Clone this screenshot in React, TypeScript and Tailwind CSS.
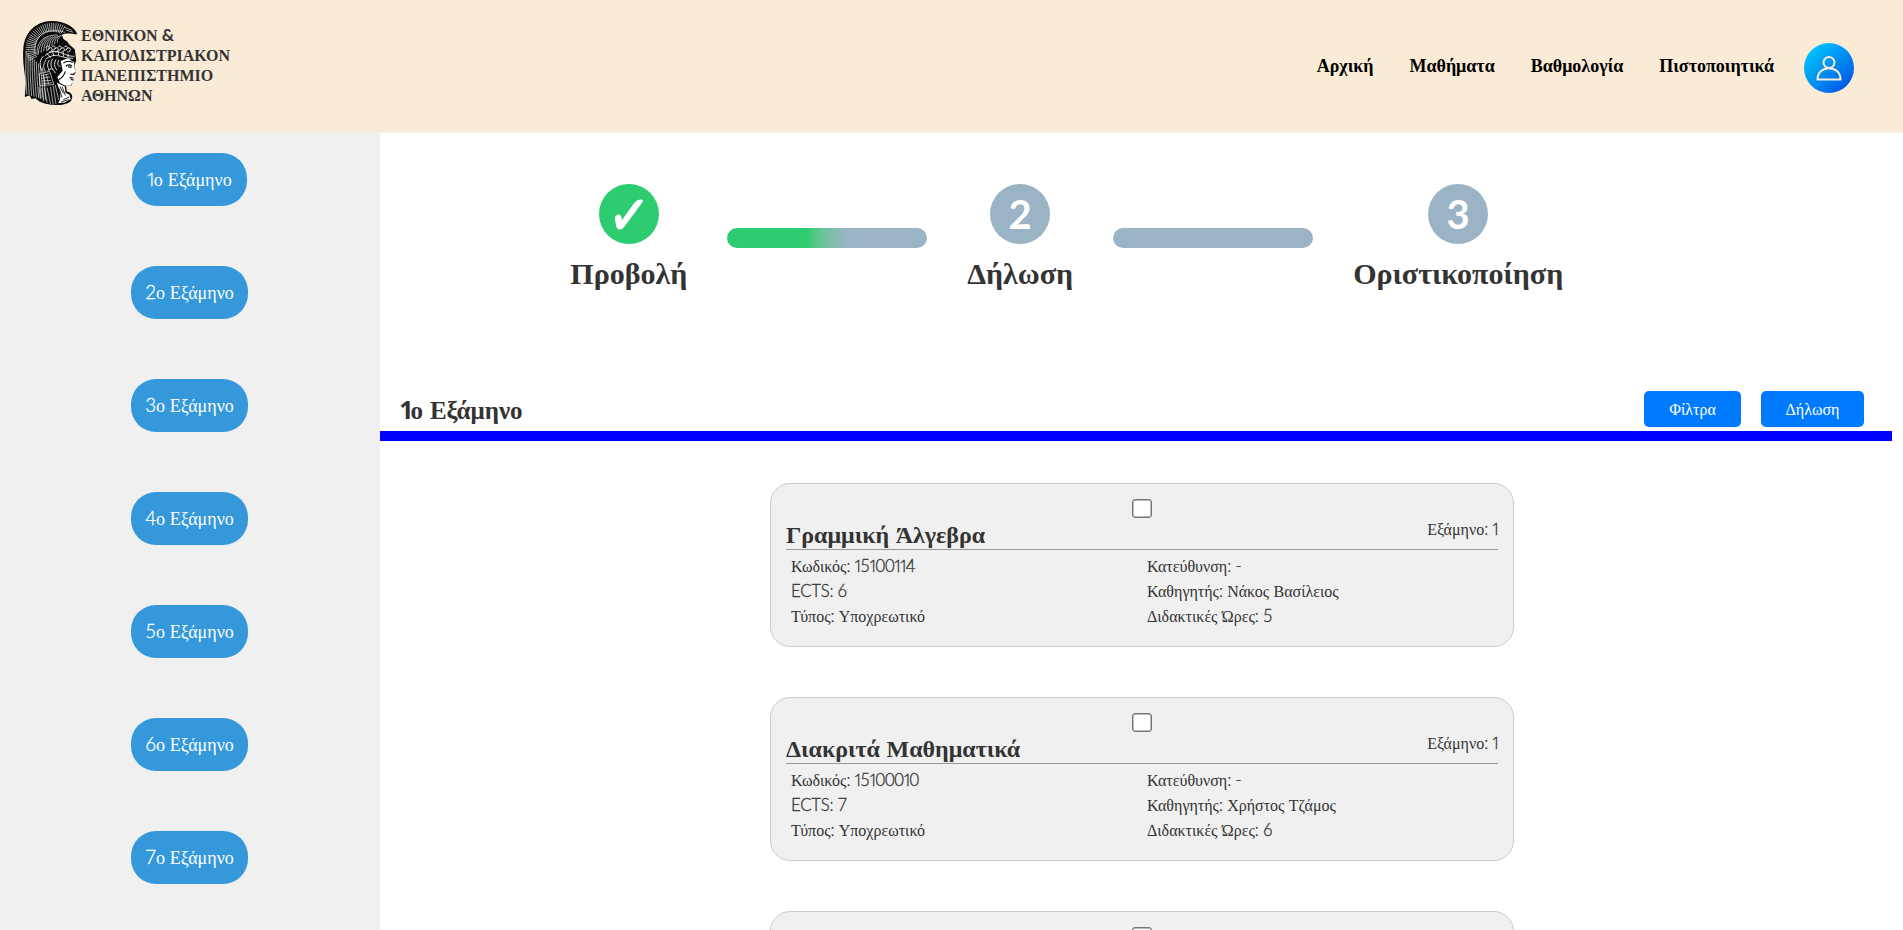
import { Fragment } from "react";

const GREEK = /[\u0370-\u03ff]/;

function T({ children, latin = "font-['Lato'] text-[1.04em] font-light leading-none tracking-[-0.01em] [-webkit-text-stroke:0.3px_currentColor]" }: { children: string; latin?: string }) {
  const parts = children.split(/([\u0370-\u03ff]+|1)/).filter(Boolean);
  return (
    <>
      {parts.map((p, i) => {
        if (GREEK.test(p)) return <Fragment key={i}>{p}</Fragment>;
        return (
          <span key={i} className={latin}>
            {p === "1" ? <span className="-mr-[0.15em] -ml-[0.07em] font-['Open_Sans']">1</span> : p}
          </span>
        );
      })}
    </>
  );
}

const bold = "font-['Lato'] font-bold tracking-[0.03em] leading-none";

const nav = ["Αρχική", "Μαθήματα", "Βαθμολογία", "Πιστοποιητικά"];

const courses = [
  { name: "Γραμμική Άλγεβρα", code: "15100114", ects: 6, prof: "Νάκος Βασίλειος", hours: 5 },
  { name: "Διακριτά Μαθηματικά", code: "15100010", ects: 7, prof: "Χρήστος Τζάμος", hours: 6 },
];

function Athena() {
  const crest = Array.from({ length: 30 }, (_, i) => {
    const a = ((-62 + i * -5) * Math.PI) / 180;
    const c = Math.cos(a);
    const s = Math.sin(a);
    return `M${(104 + 52 * c).toFixed(1)} ${(96 + 50 * s).toFixed(1)}L${(104 + 78 * c).toFixed(1)} ${(96 + 74 * s).toFixed(1)}`;
  }).join("");
  const strands = Array.from({ length: 9 }, (_, i) => `M${26 + i * 6} ${104 + i * 6}Q${22 + i * 7} 170 ${28 + i * 7} ${228 + i * 2}`).join("");
  const curls = Array.from({ length: 8 }, (_, i) => `M${84 + i * 9} ${92 + (i % 2) * 5}q7 -9 10 1q-1 9 -8 8`).join("");
  const cap = Array.from({ length: 8 }, (_, i) => `M${62 + i * 8} ${112 - i * 5}Q${62 + i * 8} ${82 - i * 3} ${84 + i * 7} ${64 - i}`).join("");
  return (
    <svg width="65" height="95" viewBox="2 1 192 276" preserveAspectRatio="none" className="block shrink-0">
      <path d="M177 54C170 30 130 12 92 16C50 20 22 52 18 92C14 130 22 165 25 195L22 236L36 232L42 242L54 240C70 262 135 266 156 250C168 238 162 222 146 220L144 204L160 202L166 188L164 176L173 164L168 146L174 130L170 98C160 90 152 84 148 76L136 68L132 56C145 48 160 54 177 54Z" fill="#0a0a0a" />
      <path d="M128 132L150 124L168 136L167 148L173 163L165 168L167 176L163 182L165 192L158 202L142 204L126 196L118 178L134 160Z" fill="#fff" />
      <path d="M136 138Q148 128 164 136M143 147Q152 140 162 146M150 148L160 150M157 170L168 171M154 180L163 181M158 185L164 187M142 162Q136 180 122 186" stroke="#0a0a0a" strokeWidth="3.5" fill="none" />
      <path d="M116 194L140 206L142 224L154 230L158 242L140 252L120 254Q136 236 116 194Z" fill="#fff" />
      <path d="M126 206L136 226M132 206L142 232M136 244L154 236M130 250L152 244M124 212L132 238" stroke="#0a0a0a" strokeWidth="2.5" />
      <g stroke="#fff" strokeWidth="1.8" fill="none" strokeLinecap="round">
        <path d={crest} />
        <path d={strands} />
        <path d={cap} />
        <path d={curls} strokeWidth="2.4" />
        <path d="M52 110C48 70 70 44 104 44Q124 42 140 48M58 112C56 76 78 56 118 56M144 42L164 48M140 34L160 42" />
        <path d="M82 116Q104 96 130 108T168 118M84 126Q104 110 128 118T164 124M88 110L98 122M104 104L108 116M120 104L122 114M136 108L136 118M150 112L150 120" strokeWidth="2.4" />
        <path d="M76 118Q60 134 72 160M84 130Q72 144 82 162M94 130Q84 142 94 158M104 126Q94 140 104 156M114 128Q104 142 116 158M90 160Q102 146 112 166M122 130Q114 144 126 148" strokeWidth="2.4" />
        <path d="M66 168L96 162L108 200L68 204ZM72 174L94 169M72 182L96 178M73 190L99 188M74 198L102 195" />
        <path d="M78 174L82 200M86 172L92 198" />
        <path d="M72 212L78 248M80 210L88 252M88 210L98 256M98 208L106 258M106 204L114 256M112 202L122 244M64 208L68 240" />
      </g>
    </svg>
  );
}

function Line({ children }: { children: string }) {
  return <p className="h-[25px] leading-[25px] whitespace-nowrap"><T>{children}</T></p>;
}

function CourseBox({ children }: { children?: React.ReactNode }) {
  return (
    <section className="h-[164px] w-[744px] shrink-0 rounded-[20px] border border-[#ccc] bg-[#f0f0f0] px-[15px] pt-[15px] text-[16px]">
      <input type="checkbox" className="mx-auto mb-px block h-[19px] w-5 appearance-none rounded-[3px] border border-[#767676] bg-white shadow-[inset_0_0_0_0.5px_#767676]" />
      {children}
    </section>
  );
}

function Step({ mark, label }: { mark?: string; label: string }) {
  return (
    <div className="flex flex-col items-center">
      <div className={`flex size-[60px] items-center justify-center rounded-full text-[40px] leading-none text-white ${mark ? "bg-[#9ab4c6]" : "bg-[#2ecc71]"}`}>
        {mark ? (
          <span className="font-['Lato'] font-bold">{mark}</span>
        ) : (
          <svg width="30" height="31" viewBox="0 0 30 31"><path d="M1 19.500C1 16.500 2.500 15.500 5 15.500Q7.500 15.500 8 21L20.500 3.500Q23 0.500 26.500 0.500Q30.500 0.500 27.500 4.500L10.500 27.500Q8.500 30.500 5.800 30.500Q3.300 30.500 2.500 28Q1 23 1 19.500Z" fill="#fff" /></svg>
        )}
      </div>
      <div className="mt-[11px] text-[30px] leading-[38px] font-bold">{label}</div>
    </div>
  );
}

export default function App() {
  return (
    <div className="h-[930px] w-full overflow-hidden bg-white font-['Liberation_Serif',serif] text-[#333]">
      <header className="flex h-[133px] items-start justify-between border-b border-[#f0f0f0] bg-[#faebd7] pl-[18px]">
        <div className="flex pt-4">
          <Athena />
          <div className="-ml-[2px] pt-[10px] text-[16px] leading-5 font-bold">
            <div>ΕΘΝΙΚΟΝ <span className="font-['Lato'] text-[17px] leading-none">&amp;</span></div>
            <div>ΚΑΠΟΔΙΣΤΡΙΑΚΟΝ</div>
            <div>ΠΑΝΕΠΙΣΤΗΜΙΟ</div>
            <div>ΑΘΗΝΩΝ</div>
          </div>
        </div>
        <div className="flex pt-[43px] pr-[49px]">
          <nav className="flex gap-9 pt-[11px] text-[18px] leading-6 font-bold text-black">
            {nav.map((n) => <a key={n}>{n}</a>)}
          </nav>
          <div className="ml-[30px] flex size-[50px] items-center justify-center rounded-full bg-linear-135 from-[#00d4ff] to-[#0040e0]">
            <svg width="26" height="26" viewBox="0 0 26 26" fill="none" stroke="#faebd7" strokeWidth="2"><circle cx="13" cy="7.500" r="5.500" /><path d="M1.500 24.500C1.500 9.500 24.500 9.500 24.500 24.500Z" /></svg>
          </div>
        </div>
      </header>
      <div className="flex">
        <aside className="flex h-[797px] w-[380px] shrink-0 flex-col items-center gap-[60px] overflow-hidden bg-[#f0f0f0] pt-5 pr-px">
          {[1, 2, 3, 4, 5, 6, 7].map((n) => (
            <button key={n} className={`h-[53px] shrink-0 rounded-[25px] bg-[#3498db] pt-px text-[18px] whitespace-nowrap text-white ${n === 1 ? "w-[115px]" : "w-[117px]"}`}><T>{`${n}ο Εξάμηνο`}</T></button>
          ))}
        </aside>
        <main className="flex-1">
          <div className="flex gap-10 pt-[51px] pl-[190.3px]">
            <Step label="Προβολή" />
            <div className="mt-11 h-5 w-[200px] rounded-[10px] bg-linear-to-r from-[#2ecc71] from-40% to-[#9ab4c6] to-60%" />
            <Step mark="2" label="Δήλωση" />
            <div className="mt-11 h-5 w-[200px] rounded-[10px] bg-[#9ab4c6]" />
            <Step mark="3" label="Οριστικοποίηση" />
          </div>
          <div className="mt-[98px] mr-[11px] flex h-[50px] items-start justify-between border-b-[10px] border-[#0000ff] pr-7 pl-[21px]">
            <h2 className="text-[25px] leading-[39px] font-bold"><T latin={bold}>1ο Εξάμηνο</T></h2>
            <div className="flex gap-5 text-[16px] text-white">
              <button className="h-9 w-[97px] rounded-[5px] bg-[#007bff] pt-px">Φίλτρα</button>
              <button className="h-9 w-[103px] rounded-[5px] bg-[#007bff] pt-px">Δήλωση</button>
            </div>
          </div>
          <div className="flex flex-col gap-[50px] pt-[42px] pl-[390px]">
            {courses.map((c) => (
              <CourseBox key={c.code}>
                <div className="flex h-[31px] items-start justify-between border-b border-[#999]">
                  <h3 className="text-[24px] leading-[32px] font-bold"><T latin={bold}>{c.name}</T></h3>
                  <span className="leading-[21px] whitespace-nowrap"><T>Εξάμηνο: 1</T></span>
                </div>
                <div className="grid grid-cols-[356px_1fr] pt-1 pl-[5px]">
                  <Line>{`Κωδικός: ${c.code}`}</Line>
                  <Line>Κατεύθυνση: -</Line>
                  <Line>{`ECTS: ${c.ects}`}</Line>
                  <Line>{`Καθηγητής: ${c.prof}`}</Line>
                  <Line>Τύπος: Υποχρεωτικό</Line>
                  <Line>{`Διδακτικές Ώρες: ${c.hours}`}</Line>
                </div>
              </CourseBox>
            ))}
            <CourseBox />
          </div>
        </main>
      </div>
    </div>
  );
}
